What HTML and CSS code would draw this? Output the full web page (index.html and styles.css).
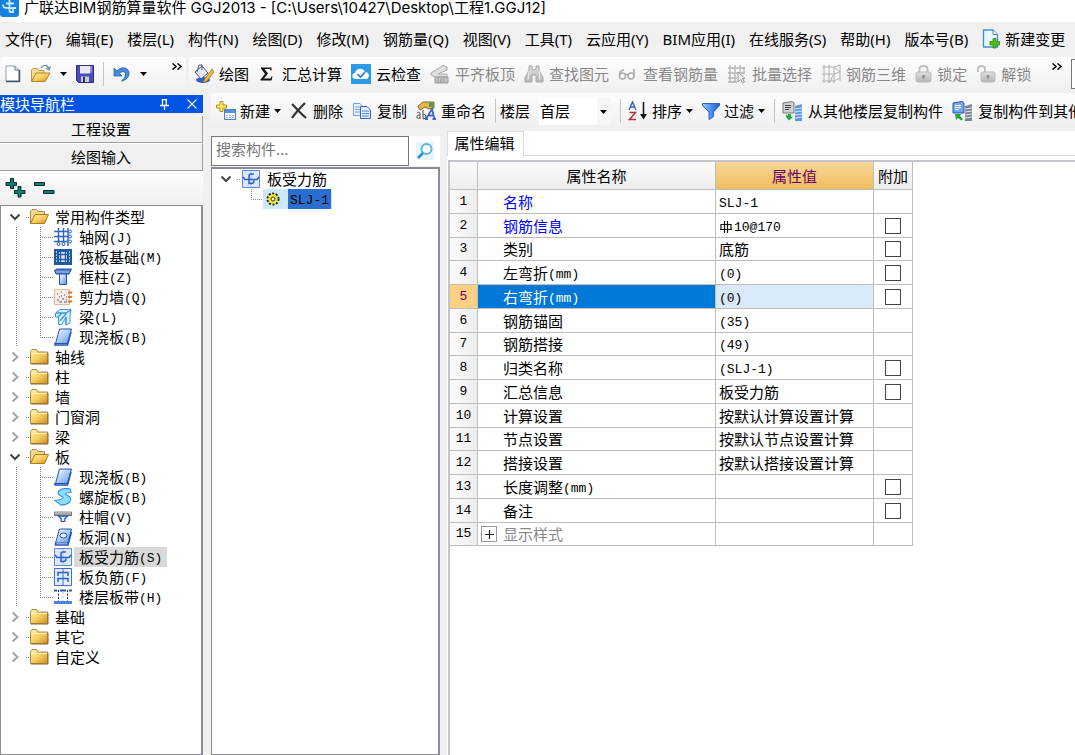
FILE: index.html
```html
<!DOCTYPE html>
<html lang="zh-CN">
<head>
<meta charset="utf-8">
<title>广联达BIM钢筋算量软件 GGJ2013</title>
<link rel="stylesheet" href="styles.css">
</head>
<body>
<svg class="sprite" aria-hidden="true">
  <defs>
    <linearGradient id="gold" x1="0" y1="0" x2="1" y2="1"><stop offset="0" stop-color="#fff0a8"/><stop offset=".5" stop-color="#f6cf62"/><stop offset="1" stop-color="#cf8f1c"/></linearGradient>
    <linearGradient id="blue" x1="0" y1="0" x2="1" y2="1"><stop offset="0" stop-color="#ffffff"/><stop offset="1" stop-color="#5a97e8"/></linearGradient>
    <linearGradient id="funnel" x1="0" y1="0" x2="1" y2="0"><stop offset="0" stop-color="#9cc8ff"/><stop offset=".5" stop-color="#4a8ff0"/><stop offset="1" stop-color="#1d5fd0"/></linearGradient>
    <linearGradient id="grey" x1="0" y1="0" x2="0" y2="1"><stop offset="0" stop-color="#dedede"/><stop offset="1" stop-color="#b4b4b4"/></linearGradient>
  </defs>
  <symbol id="i-closed" viewBox="0 0 20 18"><path d="M1.5 15.500V3.500L3 1.500H7.500L9 4H18.500V15.500Z" fill="url(#gold)" stroke="#a98a50"/><path d="M2 5.500H18" stroke="#fff3c0"/><path d="M2 16h17V5" fill="none" stroke="#8d6420"/></symbol>
  <symbol id="i-open" viewBox="0 0 20 18"><path d="M1.500 15.500V3L3 1.500H7.500L9 3.500H15.500V7" fill="#f3d98a" stroke="#a98a50"/><path d="M1.500 15.500L6 6.500H19.500L15.500 15.500Z" fill="url(#gold)" stroke="#b07a18"/></symbol>
  <symbol id="i-grid" viewBox="0 0 18 18"><path d="M4.500 0V18M9.500 0V18M14 0V18M0 3.500H15M0 8.500H15M0 13.500H15" stroke="#2d66c8" stroke-width="1.500"/><g fill="#fff" stroke="#2d66c8"><circle cx="16" cy="3.500" r="1.500"/><circle cx="16" cy="8.500" r="1.500"/><circle cx="16" cy="13.500" r="1.500"/><circle cx="4.500" cy="16" r="1.500"/><circle cx="9.500" cy="16" r="1.500"/></g></symbol>
  <symbol id="i-raft" viewBox="0 0 18 18"><path d="M0 1H18V17H0Z" fill="#1f5a9e"/><path d="M2.500 3V15M15.500 3V15" stroke="#9cc8f0" stroke-dasharray="2 1"/><path d="M5 4H13V14H5Z" fill="#dceafa"/><path d="M6.500 2V16M11.500 2V16M3 6.500H15M3 11.500H15" stroke="#245fa5" stroke-width="1.500"/></symbol>
  <symbol id="i-column" viewBox="0 0 18 18"><path d="M.5 2.500L3 1H17.500L15 6H2Z" fill="#4f7fd0" stroke="#2450a4"/><path d="M2 4H15" stroke="#a8c8f4"/><path d="M5.500 6H12.500V16.500H5.500Z" fill="url(#blue)" stroke="#2450a4"/></symbol>
  <symbol id="i-wall" viewBox="0 0 18 18"><path d="M.5 1.500H15.500V16.500H.5Z" fill="#f4ece8" stroke="#e4b8a0"/><path d="M3 6h1M7 4h1M10 7h1M5 9h1M8 11h2M3 12h2M12 12h1M5 14h3M10 14h3M7 8h1M12 9h1" stroke="#555" stroke-width="1.200"/><path d="M14 4.500h4M14 9h4M14 13.500h4" stroke="#e07a28" stroke-width="2"/></symbol>
  <symbol id="i-beam" viewBox="0 0 18 18"><path d="M1.500 5L6 1.500H17L16 8V15L12 17V9L8 16.500H4.500V9H1.500Z" fill="#d8efff" stroke="#3d95e0"/><path d="M2 5H12L17 2M4 9L8 5M6 13L12 6M12 9V17" stroke="#3d95e0" stroke-width="1.300" fill="none"/></symbol>
  <symbol id="i-slab" viewBox="0 0 18 18"><path d="M5.500 1H17.500L13.500 15.500H1.500Z" fill="url(#blue)" stroke="#2553b4"/><path d="M1 15V17H13.500L17 4" fill="none" stroke="#2553b4" stroke-width="1.500"/></symbol>
  <symbol id="i-spiral" viewBox="0 0 20 20"><path d="M18 1C11-.5 5 1.500 4.500 5.500C4 8.500 11 9 10 11C9 13.500 5 13 1 14L8 19C14 19 19 16 18.500 12C18 8 12 8 13 6.500C13.500 5 16 5 19 5Z" fill="#8fdcff" stroke="#2f8fe0" stroke-width="1.200"/></symbol>
  <symbol id="i-cap" viewBox="0 0 20 18"><path d="M.5 3.500H19.500V7.500H.5Z" fill="#9a9a9a" stroke="#6a6a6a"/><path d="M1 4.500H19" stroke="#d8d8d8"/><path d="M5 8H15L12 11V14H8V11Z" fill="#dceaff" stroke="#2458c0" stroke-width="1.300"/></symbol>
  <symbol id="i-hole" viewBox="0 0 18 18"><path d="M5.500 1H17.500L14 15H1.500Z" fill="url(#blue)" stroke="#2553b4"/><path d="M1.500 15V17H14L17.500 4" fill="none" stroke="#2553b4" stroke-width="1.500"/><ellipse cx="9.500" cy="7.500" rx="3.500" ry="2.500" fill="#e8f2ff" stroke="#2553b4"/></symbol>
  <symbol id="i-rebar" viewBox="0 0 18 18"><path d="M.5 .5H17.500V17.500H.5Z" fill="#dbe8ff" stroke="#5c88dc"/><path d="M9 1V17" stroke="#a4c0f0"/><path d="M1 7L3 9.500H15L17 7M12 4H9Q7 4 7 6V13.500H9.500Q12 13.500 12 10.500" fill="none" stroke="#2c60c0" stroke-width="1.500"/></symbol>
  <symbol id="i-negative" viewBox="0 0 18 18"><path d="M.5 .5H17.500V17.500H.5Z" fill="#e2edff" stroke="#3d70cc"/><path d="M9 1V17" stroke="#3d70cc"/><path d="M4 8V4.500H14V8M4 14V10.500H14V14" fill="none" stroke="#2c60c0" stroke-width="1.500"/></symbol>
  <symbol id="i-strip" viewBox="0 0 18 18"><path d="M0 2.500H3M6 2.500H12M15 2.500H18" stroke="#2458c0" stroke-width="2"/><path d="M4.500 2V14M13.500 2V14" stroke="#222" stroke-dasharray="2 1.500"/><path d="M9 4V14" stroke="#9db8e8" stroke-dasharray="2 2"/><path d="M0 14.500H18" stroke="#4a84e0" stroke-width="3"/></symbol>
  <symbol id="i-down" viewBox="0 0 12 12"><path d="M1.500 3.500L6 8L10.500 3.500" fill="none" stroke="#444" stroke-width="2"/></symbol>
  <symbol id="i-right" viewBox="0 0 12 12"><path d="M3.500 1.500L8.500 6L3.500 10.500" fill="none" stroke="#a4a4a4" stroke-width="2"/></symbol>
  <symbol id="i-caret" viewBox="0 0 7 4"><path d="M0 0H7L3.500 4Z" fill="#000"/></symbol>
</svg>

<header class="titlebar">
  <svg class="logo" viewBox="0 0 20 20"><rect y="-4" width="19" height="21" rx="3" fill="#1682e0"/><path d="M9.500 0V12M3 4.500C3 9 5 8 16 8M6 3.500H14M9.500 12H13V9" fill="none" stroke="#cdeaff" stroke-width="1.800"/></svg>
  <h1>广联达BIM钢筋算量软件 GGJ2013 - [C:\Users\10427\Desktop\工程1.GGJ12]</h1>
</header>

<nav class="menubar">
  <button>文件(F)</button><button>编辑(E)</button><button>楼层(L)</button><button>构件(N)</button><button>绘图(D)</button><button>修改(M)</button><button>钢筋量(Q)</button><button>视图(V)</button><button>工具(T)</button><button>云应用(Y)</button><button>BIM应用(I)</button><button>在线服务(S)</button><button>帮助(H)</button><button>版本号(B)</button>
  <button class="change"><svg width="18" height="20" viewBox="0 0 18 20"><path d="M1.500 1H11L15.500 5.500V18H1.500Z" fill="#e9f5ff" stroke="#3f8fd0" stroke-width="1.300"/><path d="M11 1V5.500H15.500" fill="#fff" stroke="#3f8fd0"/><path d="M11 9.500H14V12.500H17.500V16H14V19H11V16H8V12.500H11Z" fill="#4fc01c" stroke="#2c8a10" stroke-width=".8"/></svg>新建变更</button>
  <svg class="caret" width="7" height="4"><use href="#i-caret"/></svg>
</nav>

<div class="toolrow">
  <div class="bar file-bar">
    <button aria-label="新建"><svg width="16" height="18" viewBox="0 0 16 18"><path d="M1 1H10L14 5V16H1Z" fill="#fff" stroke="#8aa0bc"/><path d="M10 1V5H14" fill="#dce8f6" stroke="#5a7898"/><path d="M14.500 5V16.500H1" fill="none" stroke="#3c5878" stroke-width="1.500"/></svg></button>
    <button class="split" aria-label="打开"><svg width="22" height="20" viewBox="0 0 22 20"><path d="M1.500 17V6L3 4.500H7L9 6.500H14V9" fill="#f6dc90" stroke="#c0964a"/><path d="M1.500 17.500L6 9H20L15 17.500Z" fill="url(#gold)" stroke="#b98220"/><path d="M11 4C14 0 18 1 19 5M20.500 2.500L19 6L16 4" fill="none" stroke="#7890a8" stroke-width="1.300"/></svg><svg class="caret" width="7" height="4"><use href="#i-caret"/></svg></button>
    <button aria-label="保存"><svg width="18" height="18" viewBox="0 0 18 18"><path d="M.5 .5H17.500V17.500H2.500L.5 15.500Z" fill="#4a4ab8" stroke="#30307c"/><path d="M4 1H14V8.500H4Z" fill="#e8e8fa"/><path d="M14 1h2v7h-2z" fill="#8a8ae0"/><path d="M5 11.500H13V17H5Z" fill="#c8d0d8"/><path d="M7 12H9V17H7Z" fill="#2c2c6c"/></svg></button>
    <i class="sep"></i>
    <button class="split undo" aria-label="撤销"><svg width="18" height="18" viewBox="0 0 18 18"><path d="M1 3V11H9L6.500 8.500C10 5 13 7 12.500 10C12 13 10 14.500 8.500 16C13 15.500 16.500 12 16 7.500C15.500 3 9 .5 4 6Z" fill="#4a88e0" stroke="#2c62b8" stroke-width=".8"/></svg><svg class="caret" width="7" height="4"><use href="#i-caret"/></svg></button>
    <svg class="more" width="10" height="7" viewBox="0 0 10 7"><path d="M.5 .5L4 3.500L.5 6.500M5.500 .5L9 3.500L5.500 6.500" fill="none" stroke="#000" stroke-width="1.500"/></svg>
  </div>
  <div class="bar main-bar">
    <button><svg width="20" height="20" viewBox="0 0 20 20"><ellipse cx="9" cy="16" rx="7" ry="3" fill="#2b62c8"/><path d="M1 8L8 2L14 9L7 15Z" fill="#e4eaf4" stroke="#48587c"/><path d="M3 8L5 1H8V6" fill="none" stroke="#48587c"/><path d="M18 5L10 16L9 19L13 17L20 8Z" fill="#f0b63c" stroke="#98651c" stroke-width=".7"/></svg>绘图</button>
    <button class="sum"><svg width="13" height="14" viewBox="0 0 13 14"><path d="M1 .5H11.500V3.500H10.500L10 2H4.500L8 6.500L4 11.500H10.500L11.500 9.500H12.500L11.500 13.500H.5V12.500L5 7L1 1.500Z" fill="#111"/></svg>汇总计算</button>
    <button><svg width="20" height="20" viewBox="0 0 20 20"><rect width="20" height="20" fill="#2d9ae4"/><path d="M4 15C0 14 1 9 4 9C5 4 12 3 14 8C19 8 19 15 15 15Z" fill="#fff"/><path d="M6.500 10L9.500 13L14 8" fill="none" stroke="#2a78b8" stroke-width="1.600"/></svg>云检查</button>
    <button disabled><svg width="20" height="20" viewBox="0 0 20 20"><path d="M1 9L13 1.500L17 3V6L8 10L17 10V13L5 13L1 11Z" fill="#e0e0e0" stroke="#aaa"/><path d="M5 13H18V19H5ZM8 14v5M11 14v5M14 13v6" fill="#c4c4c4" stroke="#999"/></svg>平齐板顶</button>
    <button disabled><svg width="20" height="20" viewBox="0 0 20 20"><path d="M5 2H8V5L10 6L12 5V2H15V6L19 14V18H12V11H8V18H1V14L5 6Z" fill="url(#grey)" stroke="#a8a8a8"/><path d="M5 7L4 16M15 7L16 16" stroke="#eee"/></svg>查找图元</button>
    <button disabled><svg width="20" height="20" viewBox="0 0 20 20"><g fill="none" stroke="#aaa" stroke-width="1.500"><circle cx="4.500" cy="12" r="3"/><circle cx="13" cy="12" r="3"/><path d="M1.500 12C1 8 3 6 6 6M16 12V5M7.500 11Q9 10 10 11"/></g></svg>查看钢筋量</button>
    <button disabled><svg width="20" height="20" viewBox="0 0 20 20"><path d="M1 4H18M1 9H18M1 14H10M1 18H10M3 1V19M8 1V19M13 1V9M17 3V9" stroke="#b4b4b4" stroke-width="1.300"/><path d="M11 8V18L13.500 15.500L15.500 19L17.500 18L15.500 14.500H18Z" fill="#eee" stroke="#999"/></svg>批量选择</button>
    <button disabled><svg width="20" height="20" viewBox="0 0 20 20"><path d="M1 3H13L19 1M1 10H13L19 8M1 17H13L19 14M3 1V19M8 1V19M13 3V19M19 1V17M13 3L19 8M8 19L13 10" fill="none" stroke="#b0b0b0"/></svg>钢筋三维</button>
    <button disabled><svg width="17" height="20" viewBox="0 0 17 20"><path d="M4.500 9V5C4.500 1 12.500 1 12.500 5V9" fill="none" stroke="#c0c0c0" stroke-width="2"/><rect x="1" y="8" width="15" height="10" rx="2" fill="url(#grey)" stroke="#bbb"/><path d="M8.500 11V15M7 12.500H10" stroke="#8a8a8a" stroke-width="1.300"/></svg>锁定</button>
    <button disabled><svg width="20" height="20" viewBox="0 0 20 20"><path d="M2 8V5C2 1 9 1 9 5V9" fill="none" stroke="#c0c0c0" stroke-width="2"/><rect x="5" y="8" width="14" height="10" rx="2" fill="url(#grey)" stroke="#bbb"/><path d="M12 11V15M10.500 12.500H13.500" stroke="#8a8a8a" stroke-width="1.300"/></svg>解锁</button>
    <svg class="more" width="10" height="7" viewBox="0 0 10 7"><path d="M.5 .5L4 3.500L.5 6.500M5.500 .5L9 3.500L5.500 6.500" fill="none" stroke="#000" stroke-width="1.500"/></svg>
    <i class="next-box"></i>
  </div>
</div>

<div class="workspace">
  <aside class="navigator">
    <div class="nav-title"><h2>模块导航栏</h2>
      <button aria-label="固定"><svg width="9" height="11" viewBox="0 0 9 11"><path d="M2 .5H7M2.500 0V6M6.200 0V6M0 6.500H9M4.500 7V11" stroke="#fff" stroke-width="1.300"/></svg></button>
      <button aria-label="关闭"><svg width="10" height="10" viewBox="0 0 10 10"><path d="M.5 .5L9.500 9.500M9.500 .5L.5 9.500" stroke="#fff" stroke-width="1.100"/></svg></button>
    </div>
    <button class="section">工程设置</button>
    <button class="section">绘图输入</button>
    <div class="expand-bar">
      <button aria-label="全部展开"><svg width="21" height="20" viewBox="0 0 21 20"><path d="M5.500 .5H8.500V4.500H11.500V7.500H8.500V10.500H5.500V7.500H1V4.500H5.500ZM13 8.500H16V12.500H20V15.500H16V19H13V15.500H9.500V12.500H13Z" fill="#0a8078" stroke="#0a2c2c"/></svg></button>
      <button aria-label="全部折叠"><svg width="21" height="20" viewBox="0 0 21 20"><path d="M.5 4.500H10.500V7.500H.5ZM9.500 12.500H20V15.500H9.500Z" fill="#0a8078" stroke="#0a2c2c"/></svg></button>
    </div>
    <ul class="tree">
      <li><div class="row"><svg class="toggle"><use href="#i-down"/></svg><i class="stub"></i><svg class="folder"><use href="#i-open"/></svg><span class="label">常用构件类型</span></div>
        <ul>
          <li class="row"><i class="rail"></i><i class="elbow"></i><svg class="item"><use href="#i-grid"/></svg><span class="label">轴网<b>(J)</b></span></li>
          <li class="row"><i class="rail"></i><i class="elbow"></i><svg class="item"><use href="#i-raft"/></svg><span class="label">筏板基础<b>(M)</b></span></li>
          <li class="row"><i class="rail"></i><i class="elbow"></i><svg class="item"><use href="#i-column"/></svg><span class="label">框柱<b>(Z)</b></span></li>
          <li class="row"><i class="rail"></i><i class="elbow"></i><svg class="item"><use href="#i-wall"/></svg><span class="label">剪力墙<b>(Q)</b></span></li>
          <li class="row"><i class="rail"></i><i class="elbow"></i><svg class="item"><use href="#i-beam"/></svg><span class="label">梁<b>(L)</b></span></li>
          <li class="row"><i class="rail"></i><i class="elbow"></i><svg class="item"><use href="#i-slab"/></svg><span class="label">现浇板<b>(B)</b></span></li>
        </ul></li>
      <li><div class="row"><svg class="toggle"><use href="#i-right"/></svg><i class="stub"></i><svg class="folder"><use href="#i-closed"/></svg><span class="label">轴线</span></div></li>
      <li><div class="row"><svg class="toggle"><use href="#i-right"/></svg><i class="stub"></i><svg class="folder"><use href="#i-closed"/></svg><span class="label">柱</span></div></li>
      <li><div class="row"><svg class="toggle"><use href="#i-right"/></svg><i class="stub"></i><svg class="folder"><use href="#i-closed"/></svg><span class="label">墙</span></div></li>
      <li><div class="row"><svg class="toggle"><use href="#i-right"/></svg><i class="stub"></i><svg class="folder"><use href="#i-closed"/></svg><span class="label">门窗洞</span></div></li>
      <li><div class="row"><svg class="toggle"><use href="#i-right"/></svg><i class="stub"></i><svg class="folder"><use href="#i-closed"/></svg><span class="label">梁</span></div></li>
      <li><div class="row"><svg class="toggle"><use href="#i-down"/></svg><i class="stub"></i><svg class="folder"><use href="#i-open"/></svg><span class="label">板</span></div>
        <ul>
          <li class="row"><i class="rail"></i><i class="elbow"></i><svg class="item"><use href="#i-slab"/></svg><span class="label">现浇板<b>(B)</b></span></li>
          <li class="row"><i class="rail"></i><i class="elbow"></i><svg class="item"><use href="#i-spiral"/></svg><span class="label">螺旋板<b>(B)</b></span></li>
          <li class="row"><i class="rail"></i><i class="elbow"></i><svg class="item"><use href="#i-cap"/></svg><span class="label">柱帽<b>(V)</b></span></li>
          <li class="row"><i class="rail"></i><i class="elbow"></i><svg class="item"><use href="#i-hole"/></svg><span class="label">板洞<b>(N)</b></span></li>
          <li class="row"><i class="rail"></i><i class="elbow"></i><svg class="item"><use href="#i-rebar"/></svg><span class="label current">板受力筋<b>(S)</b></span></li>
          <li class="row"><i class="rail"></i><i class="elbow"></i><svg class="item"><use href="#i-negative"/></svg><span class="label">板负筋<b>(F)</b></span></li>
          <li class="row"><i class="rail"></i><i class="elbow"></i><svg class="item"><use href="#i-strip"/></svg><span class="label">楼层板带<b>(H)</b></span></li>
        </ul></li>
      <li><div class="row"><svg class="toggle"><use href="#i-right"/></svg><i class="stub"></i><svg class="folder"><use href="#i-closed"/></svg><span class="label">基础</span></div></li>
      <li><div class="row"><svg class="toggle"><use href="#i-right"/></svg><i class="stub"></i><svg class="folder"><use href="#i-closed"/></svg><span class="label">其它</span></div></li>
      <li><div class="row"><svg class="toggle"><use href="#i-right"/></svg><i class="stub"></i><svg class="folder"><use href="#i-closed"/></svg><span class="label">自定义</span></div></li>
    </ul>
  </aside>

  <main class="content">
    <div class="bar component-bar">
      <button class="split"><svg width="20" height="20" viewBox="0 0 20 20"><path d="M4 .5H7V4H10.500V7H7V10.500H4V7H.5V4H4Z" fill="#ffe860" stroke="#b89018"/><rect x="8.500" y="8.500" width="11" height="10" fill="#fff" stroke="#4a80c8"/><path d="M9 9H19V12H9Z" fill="#5a90dc"/><path d="M10 14.500H18M10 16.500H18" stroke="#8cb0e0" stroke-dasharray="2 1"/></svg>新建<svg class="caret" width="7" height="4"><use href="#i-caret"/></svg></button>
      <button><svg width="18" height="18" viewBox="0 0 18 18"><path d="M2 2C7 7 11 12 16 16M15 1C10 6 6 10 2 16" fill="none" stroke="#333" stroke-width="2.200"/></svg>删除</button>
      <button><svg width="20" height="20" viewBox="0 0 20 20"><path d="M1.500 2.500H8L11.500 6V14.500H1.500Z" fill="#e4f0ff" stroke="#7aa0d8"/><path d="M3 6H8M3 8.500H8M3 11H8" stroke="#7aa0d8"/><path d="M8.500 5.500H15L18.500 9V17.500H8.500Z" fill="#e4f0ff" stroke="#3468b8"/><path d="M10 10H17M10 12.500H17M10 15H17" stroke="#4a80cc"/></svg>复制</button>
      <button><svg width="20" height="20" viewBox="0 0 20 20"><path d="M2 5L7 1H18V7L13 8L9 6L4 9Z" fill="#e8b648" stroke="#8a6420"/><path d="M13 1.500H18V6H13Z" fill="#4c9a60"/><path d="M1 12Q4 10 4 13V18M4 14Q0 14 1 17Q3 18 4 16M7 9V18Q10 18 10 15Q9 12 7 14" fill="none" stroke="#555"/><path d="M10 18L16 8L18.500 18M13 14.500H18M16.500 18H20M9 18H12" fill="none" stroke="#3c68d0" stroke-width="1.800"/></svg>重命名</button>
      <i class="sep"></i>
      <label class="floor" for="floor">楼层</label>
      <span class="combo"><select id="floor"><option>首层</option></select><svg class="caret" width="7" height="4"><use href="#i-caret"/></svg></span>
      <i class="sep"></i>
      <button class="split"><svg width="20" height="20" viewBox="0 0 20 20"><path d="M1 9L4.500 1L8 9M2.500 6H6.500" fill="none" stroke="#3c68b8" stroke-width="1.500"/><path d="M1.500 11.500H7.500L1.500 18.500H8" fill="none" stroke="#a83838" stroke-width="1.500"/><path d="M15.500 1V15" stroke="#111" stroke-width="1.500"/><path d="M12 13H19L15.500 18.500Z" fill="#111"/></svg>排序<svg class="caret" width="7" height="4"><use href="#i-caret"/></svg></button>
      <button class="split"><svg width="18" height="18" viewBox="0 0 18 18"><path d="M.5 1.500H17.500V3.500L11.500 10V14.500L7 17.500V10L.5 3.500Z" fill="url(#funnel)" stroke="#2a62c0"/></svg>过滤<svg class="caret" width="7" height="4"><use href="#i-caret"/></svg></button>
      <i class="sep"></i>
      <button><svg width="21" height="20" viewBox="0 0 21 20"><path d="M1 2L10 .5L12 2V12H1Z" fill="#d0d0d0" stroke="#777"/><path d="M3 4.500H9M3 6.500H9M3 8.500H7" stroke="#444"/><path d="M4 13L6 15V13H9V16H11L7 19.500L4 16Z" fill="#21a838"/><path d="M13 5L20 3V20H13Z" fill="#5e98e0"/><path d="M13 8L20 7M13 11L20 10M13 14L20 13M13 17L20 16" stroke="#d6e8ff"/></svg>从其他楼层复制构件</button>
      <button><svg width="21" height="20" viewBox="0 0 21 20"><path d="M1 2L10 .5L12 2V12H1Z" fill="#78a4ec" stroke="#2458b8"/><path d="M3 4.500H9M3 6.500H9M3 8.500H7" stroke="#fff"/><path d="M3 13L9 13L8 15L11 18L9 19.500L6 17L4 19Z" fill="#21a838"/><path d="M13 5L20 3V20H13Z" fill="#7a8894"/><path d="M13 8L20 7M13 11L20 10M13 14L20 13M13 17L20 16" stroke="#e4e8ec"/></svg>复制构件到其他楼层</button>
    </div>
    <div class="panels">
      <section class="components">
        <form class="search"><input type="text" placeholder="搜索构件..." aria-label="搜索构件"><button type="button" aria-label="搜索"><svg width="18" height="18" viewBox="0 0 18 18"><rect width="18" height="18" fill="#e8f5fd"/><circle cx="10.500" cy="7" r="5" fill="#fff" stroke="#5ab4ec" stroke-width="2"/><path d="M7 11L2 16" stroke="#2f8ccc" stroke-width="2.500"/></svg></button></form>
        <ul class="tree">
          <li class="row"><svg class="toggle"><use href="#i-down"/></svg><i class="stub"></i><svg class="item"><use href="#i-rebar"/></svg><span class="label">板受力筋</span></li>
          <li class="row leaf"><i class="elbow"></i><span class="picked"><svg width="14" height="14" viewBox="0 0 14 14"><circle cx="7" cy="7" r="5.500" fill="#f4e828" stroke="#222" stroke-width="2" stroke-dasharray="2 1.500"/><circle cx="7" cy="7" r="4.500" fill="#f4e828"/><circle cx="7" cy="7" r="2" fill="#fff" stroke="#333"/></svg><span class="name"><b>SLJ-1</b></span></span></li>
        </ul>
      </section>
      <section class="properties">
        <div class="tabs"><button class="tab">属性编辑</button></div>
        <div class="sheet">
          <table>
            <colgroup><col class="c-no"><col class="c-name"><col class="c-value"><col class="c-extra"></colgroup>
            <thead><tr><th></th><th>属性名称</th><th class="active">属性值</th><th>附加</th></tr></thead>
            <tbody>
              <tr><th>1</th><td class="key">名称</td><td><b>SLJ-1</b></td><td></td></tr>
              <tr><th>2</th><td class="key">钢筋信息</td><td><svg class="steel" viewBox="0 0 12 12"><path d="M1 3.500H11V8.500H1ZM4.500 0V12M7.500 0V12M0 8.500H12" fill="none" stroke="#111" stroke-width="1.200"/></svg><b>10@170</b></td><td><input type="checkbox" aria-label="附加 钢筋信息"></td></tr>
              <tr><th>3</th><td>类别</td><td>底筋</td><td><input type="checkbox" aria-label="附加 类别"></td></tr>
              <tr><th>4</th><td>左弯折<b>(mm)</b></td><td><b>(0)</b></td><td><input type="checkbox" aria-label="附加 左弯折"></td></tr>
              <tr class="selected"><th>5</th><td>右弯折<b>(mm)</b></td><td><b>(0)</b></td><td><input type="checkbox" aria-label="附加 右弯折"></td></tr>
              <tr><th>6</th><td>钢筋锚固</td><td><b>(35)</b></td><td></td></tr>
              <tr><th>7</th><td>钢筋搭接</td><td><b>(49)</b></td><td></td></tr>
              <tr><th>8</th><td>归类名称</td><td><b>(SLJ-1)</b></td><td><input type="checkbox" aria-label="附加 归类名称"></td></tr>
              <tr><th>9</th><td>汇总信息</td><td>板受力筋</td><td><input type="checkbox" aria-label="附加 汇总信息"></td></tr>
              <tr><th>10</th><td>计算设置</td><td>按默认计算设置计算</td><td></td></tr>
              <tr><th>11</th><td>节点设置</td><td>按默认节点设置计算</td><td></td></tr>
              <tr><th>12</th><td>搭接设置</td><td>按默认搭接设置计算</td><td></td></tr>
              <tr><th>13</th><td>长度调整<b>(mm)</b></td><td></td><td><input type="checkbox" aria-label="附加 长度调整"></td></tr>
              <tr><th>14</th><td>备注</td><td></td><td><input type="checkbox" aria-label="附加 备注"></td></tr>
              <tr class="group"><th>15</th><td><div><button aria-label="展开显示样式"><svg width="9" height="9" viewBox="0 0 9 9"><path d="M0 4.500H9M4.500 0V9" stroke="#222" stroke-width="1.200"/></svg></button>显示样式</div></td><td></td><td></td></tr>
            </tbody>
          </table>
        </div>
      </section>
    </div>
  </main>
</div>
</body>
</html>
```
FILE: styles.css
```css
* { box-sizing: border-box; }
html, body { height: 100%; margin: 0; }
body {
  display: flex; flex-direction: column; overflow: hidden;
  background: #f0f0f0; color: #000;
  font: 15px/20px "Noto Sans CJK SC", sans-serif;
}
button, input, select { font: inherit; color: inherit; margin: 0; padding: 0; border: 0; background: none; }
h1, h2 { margin: 0; font: inherit; }
ul { margin: 0; padding: 0; list-style: none; }
svg { flex: none; display: block; }
b { font: 13px/14px "Liberation Mono", monospace; vertical-align: 1px; }
.sprite { position: absolute; width: 0; height: 0; }

.titlebar { flex: none; display: flex; gap: 4px; height: 22px; background: #fff; }
.logo { width: 20px; height: 20px; }
.titlebar h1 { font: 15px/16px Inter, "Noto Sans CJK SC", sans-serif; white-space: nowrap; }

.menubar { flex: none; display: flex; align-items: center; gap: 14px; height: 35px; padding: 0 0 2px 5px; overflow: hidden; font-family: "Noto Sans", "Noto Sans CJK SC", sans-serif; }
.menubar button { flex: none; white-space: nowrap; }
.menubar .change { display: flex; align-items: center; gap: 5px; }

.toolrow { flex: none; display: flex; gap: 3px; height: 36px; overflow: hidden; }
.bar { display: flex; align-items: center; background: linear-gradient(#fdfdfd, #efefef); border-radius: 4px; }
.bar button, .bar label { flex: none; display: flex; align-items: center; gap: 5px; white-space: nowrap; }
.bar button:disabled { color: #888; }
.sep { flex: none; width: 1px; height: 24px; background: #c4c4c4; }
.file-bar { flex: none; padding: 0 4px 3px 5px; gap: 9px; }
.file-bar .split { gap: 8px; }
.file-bar .undo { gap: 9px; }
.more { align-self: flex-start; margin-top: 6px; }
.file-bar .more { margin-left: 16px; }
.main-bar { flex: 1; min-width: 0; padding: 0 0 3px 5px; gap: 9px; }
.main-bar .sum { gap: 9px; padding-left: 2px; }
.main-bar .more { margin-left: 12px; }
.next-box { flex: none; width: 20px; height: 30px; background: #fff; border: 1px solid #777; }

.workspace { flex: 1; min-height: 0; display: flex; gap: 8px; }
.navigator { flex: none; width: 203px; display: flex; flex-direction: column; padding-top: 2px; }
.nav-title { display: flex; align-items: center; gap: 18px; height: 18px; margin-bottom: 2px; padding-right: 6px; background: #0054e3; color: #fff; }
.nav-title h2 { flex: 1; line-height: 18px; white-space: nowrap; }
.section { height: 28px; border-top: 1px solid #fff; border-bottom: 1px solid #a0a0a0; border-right: 1px solid #a0a0a0; }
.expand-bar { display: flex; align-items: center; gap: 8px; height: 34px; padding-left: 5px; background: linear-gradient(#fefefe, #efefef); }
.tree { background: #fff; border: 1px solid #8a8d98; }
.navigator .tree { flex: 1; min-height: 0; border-left-width: 1px; border-right-width: 2px; padding-top: 1px; }
.row { display: flex; align-items: center; height: 20px; white-space: nowrap; }
.toggle { width: 12px; height: 12px; margin-left: 8px; }
.stub { width: 4px; height: 1px; margin-left: 5px; background: repeating-linear-gradient(90deg, #888 0 1px, transparent 1px 2px); }
.folder { width: 20px; height: 18px; margin-left: -1px; }
.folder + .label { margin-left: 6px; }
.rail { width: 24px; height: 20px; margin-left: 15px; background: repeating-linear-gradient(#888 0 1px, transparent 1px 2px) 0 0 / 1px 100% no-repeat; }
.elbow {
  width: 14px; height: 20px;
  background:
    repeating-linear-gradient(#888 0 1px, transparent 1px 2px) 0 0 / 1px 100% no-repeat,
    repeating-linear-gradient(90deg, #888 0 1px, transparent 1px 2px) 0 10px / 100% 1px no-repeat;
}
.row:last-child > .elbow { background-size: 1px 10px, 100% 1px; }
.item { width: 18px; height: 18px; }
.item + .label { margin-left: 7px; }
.item + .current { margin-left: 2px; padding: 0 5px; background: #d9d9d9; }

.content { flex: 1; min-width: 0; display: flex; flex-direction: column; }
.component-bar { flex: none; height: 36px; padding-left: 5px; gap: 9px; overflow: hidden; }
.component-bar .split { gap: 4px; }
.component-bar .sep { margin-right: -2px; }
.combo { flex: none; position: relative; width: 72px; }
.combo select { width: 100%; height: 27px; padding-left: 1px; appearance: none; background: linear-gradient(90deg, #fff 0 58px, #f6f6f6 58px); }
.combo .caret { position: absolute; right: 4px; top: 12px; pointer-events: none; }
.floor { margin-left: -3px; }
.panels { flex: 1; min-height: 0; display: flex; gap: 7px; padding-top: 2px; }
.components { flex: none; width: 229px; display: flex; flex-direction: column; padding-top: 5px; }
.search { display: flex; height: 30px; margin-bottom: 1px; background: #fff; }
.search input { flex: 1; min-width: 0; padding: 0 4px 4px; border: 1px solid #777; background: #fff; }
.search input::placeholder { color: #777; opacity: 1; }
.search button { flex: none; width: 31px; display: flex; align-items: center; justify-content: center; }
.components .tree { flex: 1; border-top-width: 2px; border-right-width: 2px; }
.components .item { margin-left: 1px; }
.leaf { padding-left: 39px; }
.leaf .elbow { width: 12px; }
.picked { display: flex; align-items: center; height: 20px; padding: 0 1px 0 3px; gap: 8px; background: #cce8ff; }
.name { padding: 0 2px; height: 20px; background: #2a6fd0; }

.properties { flex: 1; min-width: 0; display: flex; flex-direction: column; background: #fff; }
.tabs { flex: none; display: flex; height: 25px; }
.tabs::after { content: ""; flex: 1; border-bottom: 1px solid #dcdcdc; }
.tab { width: 77px; padding: 0 2px 3px 0; border: 1px solid #dcdcdc; border-bottom: 0; }
.sheet { flex: 1; margin: 4px 0 0 1px; border-top: 2px solid #c4c4cc; border-left: 2px solid #c4c4cc; }
table { border-collapse: separate; border-spacing: 0; table-layout: fixed; width: 463px; }
.c-no { width: 28px; }
.c-name { width: 238px; }
.c-value { width: 158px; }
.c-extra { width: 39px; }
th, td { padding: 0; border: solid #bdbdbd; border-width: 0 1px 1px 0; font-weight: 400; line-height: 20px; white-space: nowrap; }
thead th { height: 28px; background: linear-gradient(#fcfcfc, #ededed); }
thead .active { background: linear-gradient(#f9d79a, #efbd5c); color: #6a0060; }
tbody tr { height: 24px; }
tbody tr:nth-child(4n+3) { height: 23px; }
tbody th { background: linear-gradient(90deg, #fbfbfb, #ededed); font: 13px/18px "Liberation Mono", monospace; }
td:nth-child(2) { padding-left: 25px; }
td:nth-child(3) { padding-left: 3px; }
td:nth-child(4) { text-align: center; }
td input { appearance: none; display: block; width: 16px; height: 16px; margin: 0 auto; border: 1px solid #444; background: #fff; }
.key { color: #00f; }
.steel { display: inline-block; width: 12px; height: 12px; margin: 0 2px 0 1px; vertical-align: -1px; }
.selected th { background: #ffd083; color: #6a0060; }
.selected td:nth-child(2) { background: #0078d7; color: #fff; }
.selected td:nth-child(3) { background: #d9e9f7; }
.group td:nth-child(2) { padding-left: 3px; color: #888; }
.group div { display: flex; align-items: center; gap: 6px; }
.group button { display: flex; align-items: center; justify-content: center; width: 16px; height: 16px; border: 1px solid #999; }
```
